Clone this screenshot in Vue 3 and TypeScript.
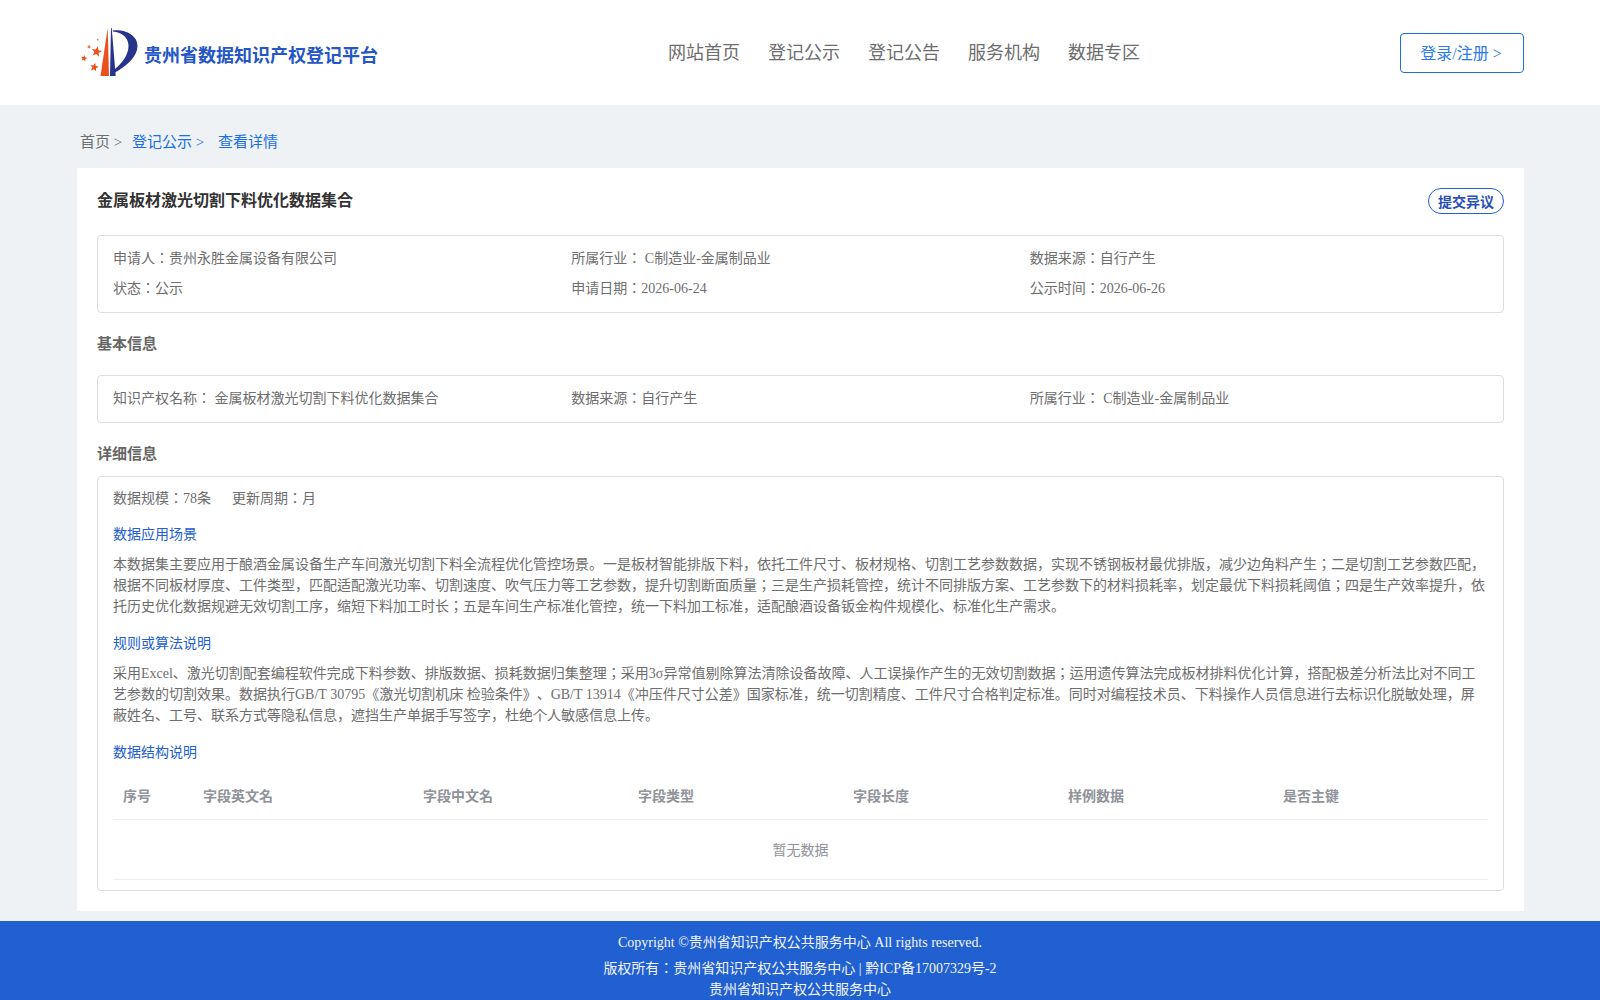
<template>
  <div class="page">
    <header class="site-header">
      <div class="brand">
        <svg class="logo" viewBox="0 0 60 52" width="60" height="52" aria-hidden="true">
          <polygon points="20.5,49 27.7,1 29,49" fill="#e9501e" />
          <polygon points="31,1 31.7,1 35.7,49 30,49" fill="#27348b" />
          <path d="M32.5 3.5 C45 2 57.5 8 57.5 19 C57.5 30 46 39 35 45.5 L35 42 C42 36 48.5 28 48.5 19 C48.5 10 41 5 33 4.5 Z" fill="#27348b" />
          <polygon :points="starPoints(16.7, 24.7, 5.5)" fill="#e9501e" />
          <polygon :points="starPoints(4, 31.3, 3.4)" fill="#e9501e" />
          <polygon :points="starPoints(14.3, 40.3, 4.6)" fill="#e9501e" />
          <circle cx="9" cy="19.7" r="1.5" fill="#ee7a50" />
          <circle cx="17.7" cy="12.7" r="0.9" fill="#ee7a50" />
        </svg>
        <span class="brand-name">贵州省数据知识产权登记平台</span>
      </div>
      <nav class="main-nav">
        <a v-for="item in navItems" :key="item" class="nav-link">{{ item }}</a>
      </nav>
      <a class="login-btn">登录/注册 &gt;</a>
    </header>

    <main class="content">
      <div class="breadcrumb">
        <span class="crumb-home">首页 &gt;</span>
        <a class="crumb-link">登记公示 &gt;</a>
        <a class="crumb-current">查看详情</a>
      </div>

      <section class="detail-card">
        <div class="title-row">
          <h1 class="detail-title">{{ detail.title }}</h1>
          <button class="objection-btn">提交异议</button>
        </div>

        <div class="info-box info-grid">
          <div v-for="cell in summary" :key="cell" class="info-cell">{{ cell }}</div>
        </div>

        <h2 class="section-title basic">基本信息</h2>
        <div class="info-box info-grid">
          <div v-for="cell in basicInfo" :key="cell" class="info-cell">{{ cell }}</div>
        </div>

        <h2 class="section-title detail">详细信息</h2>
        <div class="info-box detail-box">
          <div class="stats">
            <span>数据规模：78条</span>
            <span>更新周期：月</span>
          </div>

          <h3 class="sub-title first">数据应用场景</h3>
          <p class="body-text">{{ detail.scene }}</p>

          <h3 class="sub-title">规则或算法说明</h3>
          <p class="body-text">{{ detail.rules }}</p>

          <h3 class="sub-title">数据结构说明</h3>
          <table class="field-table">
            <colgroup>
              <col v-for="col in columns" :key="col.label" :style="{ width: col.width + 'px' }" />
            </colgroup>
            <thead>
              <tr>
                <th v-for="col in columns" :key="col.label">{{ col.label }}</th>
              </tr>
            </thead>
            <tbody>
              <tr>
                <td :colspan="columns.length" class="empty">暂无数据</td>
              </tr>
            </tbody>
          </table>
        </div>
      </section>
    </main>

    <footer class="site-footer">
      <p class="copyright">Copyright ©贵州省知识产权公共服务中心 All rights reserved.</p>
      <p class="owner">版权所有：贵州省知识产权公共服务中心 | 黔ICP备17007329号-2</p>
      <p>贵州省知识产权公共服务中心</p>
    </footer>
  </div>
</template>

<script setup lang="ts">
interface Column {
  label: string;
  width: number;
}

const navItems: string[] = ['网站首页', '登记公示', '登记公告', '服务机构', '数据专区'];

const summary: string[] = [
  '申请人：贵州永胜金属设备有限公司',
  '所属行业： C制造业-金属制品业',
  '数据来源：自行产生',
  '状态：公示',
  '申请日期：2026-06-24',
  '公示时间：2026-06-26'
];

const basicInfo: string[] = [
  '知识产权名称： 金属板材激光切割下料优化数据集合',
  '数据来源：自行产生',
  '所属行业： C制造业-金属制品业'
];

const detail = {
  title: '金属板材激光切割下料优化数据集合',
  scene:
    '本数据集主要应用于酿酒金属设备生产车间激光切割下料全流程优化管控场景。一是板材智能排版下料，依托工件尺寸、板材规格、切割工艺参数数据，实现不锈钢板材最优排版，减少边角料产生；二是切割工艺参数匹配，根据不同板材厚度、工件类型，匹配适配激光功率、切割速度、吹气压力等工艺参数，提升切割断面质量；三是生产损耗管控，统计不同排版方案、工艺参数下的材料损耗率，划定最优下料损耗阈值；四是生产效率提升，依托历史优化数据规避无效切割工序，缩短下料加工时长；五是车间生产标准化管控，统一下料加工标准，适配酿酒设备钣金构件规模化、标准化生产需求。',
  rules:
    '采用Excel、激光切割配套编程软件完成下料参数、排版数据、损耗数据归集整理；采用3σ异常值剔除算法清除设备故障、人工误操作产生的无效切割数据；运用遗传算法完成板材排料优化计算，搭配极差分析法比对不同工艺参数的切割效果。数据执行GB/T 30795《激光切割机床 检验条件》、GB/T 13914《冲压件尺寸公差》国家标准，统一切割精度、工件尺寸合格判定标准。同时对编程技术员、下料操作人员信息进行去标识化脱敏处理，屏蔽姓名、工号、联系方式等隐私信息，遮挡生产单据手写签字，杜绝个人敏感信息上传。'
};

const columns: Column[] = [
  { label: '序号', width: 80 },
  { label: '字段英文名', width: 220 },
  { label: '字段中文名', width: 215 },
  { label: '字段类型', width: 215 },
  { label: '字段长度', width: 215 },
  { label: '样例数据', width: 215 },
  { label: '是否主键', width: 215 }
];

// Five-pointed star, tilted a little like the logo
const starPoints = (cx: number, cy: number, r: number): string => {
  const pts: string[] = [];
  for (let i = 0; i < 10; i++) {
    const radius = i % 2 === 0 ? r : r * 0.42;
    const angle = -Math.PI / 2 + 0.2 + (i * Math.PI) / 5;
    pts.push(`${(cx + radius * Math.cos(angle)).toFixed(2)},${(cy + radius * Math.sin(angle)).toFixed(2)}`);
  }
  return pts.join(' ');
};
</script>

<style>
body {
  background: #eff2f5;
}
</style>

<style scoped>
.page {
  font-family: "Liberation Serif", "Noto Sans CJK JP", serif;
  font-size: 14px;
  color: #6e6e6e;
  text-spacing-trim: space-all;
}

.site-header {
  height: 105px;
  padding: 0 76px 0 77px;
  background: #fff;
  display: flex;
  align-items: center;
  box-sizing: border-box;
}

.brand {
  flex: 0 0 591px;
  display: flex;
  align-items: center;
  padding-left: 3px;
  box-sizing: border-box;
}

.logo {
  flex: none;
}

.brand-name {
  margin: 3px 0 0 4px;
  font-size: 18px;
  font-weight: 700;
  color: #2456c5;
}

.main-nav {
  display: flex;
  gap: 28px;
  margin-top: -4px;
}

.nav-link {
  font-size: 18px;
  color: #6e6e6e;
}

.login-btn {
  margin-left: auto;
  width: 124px;
  height: 40px;
  padding-right: 2px;
  line-height: 40px;
  box-sizing: border-box;
  text-align: center;
  font-size: 16px;
  color: #2a7ae9;
  border: 1px solid #1a6ee6;
  border-radius: 4px;
}

.content {
  padding: 0 76px 0 77px;
}

.breadcrumb {
  padding: 25px 0 14px 3px;
  line-height: 24px;
  font-size: 15px;
  display: flex;
}

.crumb-home {
  width: 52px;
}

.crumb-link {
  width: 86px;
  color: #1a6ee6;
}

.crumb-current {
  color: #1a6ee6;
}

.detail-card {
  padding: 20px 20px 20px;
  background: #fff;
}

.title-row {
  height: 26px;
  margin-bottom: 21px;
  display: flex;
  justify-content: space-between;
}

.detail-title {
  margin: 0;
  font-size: 16px;
  font-weight: 700;
  line-height: 26px;
  color: #333;
}

.objection-btn {
  width: 76px;
  height: 26px;
  padding: 0 0 1px;
  font-family: inherit;
  font-size: 14px;
  font-weight: 700;
  color: #2a50b5;
  background: #fff;
  border: 1px solid #2060d0;
  border-radius: 13px;
}

.info-box {
  border: 1px solid #ddd;
  border-radius: 4px;
  box-sizing: border-box;
}

.info-grid {
  padding: 8px 15px;
  display: grid;
  grid-template-columns: repeat(3, 1fr);
}

.info-cell {
  line-height: 30px;
}

.section-title {
  margin: 0;
  font-size: 15px;
  font-weight: 700;
  color: #666;
}

.section-title.basic {
  line-height: 62px;
}

.section-title.detail {
  padding: 21px 0 12px;
  line-height: 20px;
}

.detail-box {
  padding: 7px 15px 10px;
}

.stats {
  display: flex;
  gap: 21px;
  line-height: 30px;
}

.sub-title {
  margin: 16px 0 9px;
  font-size: 14px;
  font-weight: 400;
  line-height: 21px;
  color: #2060d0;
}

.sub-title.first {
  margin: 10px 0 9px;
}

.body-text {
  margin: 0;
  line-height: 21px;
}

.field-table {
  width: 100%;
  table-layout: fixed;
  border-collapse: collapse;
}

.field-table th {
  height: 47px;
  padding: 0 10px;
  box-sizing: border-box;
  text-align: left;
  font-weight: 700;
  color: #909399;
  border-bottom: 1px solid #ebeef5;
}

.field-table td.empty {
  height: 60px;
  padding: 0;
  box-sizing: border-box;
  text-align: center;
  color: #909399;
  border-bottom: 1px solid #ebeef5;
}

.site-footer {
  margin-top: 10px;
  height: 79px;
  padding-top: 11px;
  box-sizing: border-box;
  text-align: center;
  line-height: 21px;
  color: #f2f5fc;
  background: #2060d0;
  overflow: hidden;
}

.site-footer p {
  margin: 0;
}

.site-footer .copyright {
  margin-bottom: 5px;
}
</style>
